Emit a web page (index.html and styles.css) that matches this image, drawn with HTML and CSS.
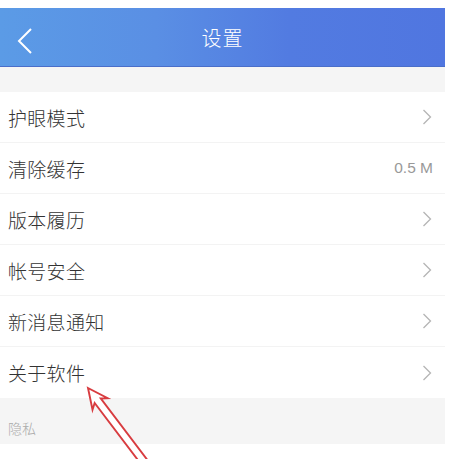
FILE: index.html
```html
<!DOCTYPE html>
<html lang="zh">
<head>
<meta charset="utf-8">
<link rel="stylesheet" href="styles.css">
</head>
<body>
<div class="screen">
  <header class="topbar">
    <svg class="back" width="18" height="28" viewBox="0 0 18 28"><path d="M15 2 L3 14 L15 26" fill="none" stroke="#fff" stroke-width="2"/></svg>
    <div class="title">设置</div>
  </header>
  <div class="gap"></div>
  <ul class="list">
    <li class="row"><span class="label">护眼模式</span><svg class="chev" width="10" height="16" viewBox="0 0 10 16"><path d="M1.5 1 L8.5 8 L1.5 15" fill="none" stroke="#b5b5b5" stroke-width="1.3"/></svg></li>
    <li class="row"><span class="label">清除缓存</span><span class="value">0.5 M</span></li>
    <li class="row"><span class="label">版本履历</span><svg class="chev" width="10" height="16" viewBox="0 0 10 16"><path d="M1.5 1 L8.5 8 L1.5 15" fill="none" stroke="#b5b5b5" stroke-width="1.3"/></svg></li>
    <li class="row"><span class="label">帐号安全</span><svg class="chev" width="10" height="16" viewBox="0 0 10 16"><path d="M1.5 1 L8.5 8 L1.5 15" fill="none" stroke="#b5b5b5" stroke-width="1.3"/></svg></li>
    <li class="row"><span class="label">新消息通知</span><svg class="chev" width="10" height="16" viewBox="0 0 10 16"><path d="M1.5 1 L8.5 8 L1.5 15" fill="none" stroke="#b5b5b5" stroke-width="1.3"/></svg></li>
    <li class="row"><span class="label">关于软件</span><svg class="chev" width="10" height="16" viewBox="0 0 10 16"><path d="M1.5 1 L8.5 8 L1.5 15" fill="none" stroke="#b5b5b5" stroke-width="1.3"/></svg></li>
  </ul>
  <div class="section">隐私</div>
  <svg class="arrow" width="140" height="110" viewBox="0 0 140 110">
    <g transform="translate(8 4) rotate(52.8)">
      <polygon points="0,0 20,-9.5 16,-3.8 120,-3.8 120,3.8 16,3.8 20,9.5" fill="#fff" stroke="#d83c40" stroke-width="1.9" stroke-linejoin="miter"/>
    </g>
  </svg>
</div>
</body>
</html>
```

FILE: styles.css
```css
* { box-sizing: border-box; }
html, body { margin: 0; padding: 0; background: #fff; }
body {
  font-family: "Noto Sans CJK SC", "Noto Sans", "Liberation Sans", sans-serif;
  overflow: hidden;
}
.screen {
  position: relative;
  width: 445px;
  margin-top: 8px;
  height: 451px;
  overflow: hidden;
}
.topbar {
  height: 59px;
  display: flex;
  align-items: center;
  justify-content: center;
  position: relative;
  background: linear-gradient(90deg, #5b9be6 0%, #5a8fe4 35%, #527be1 65%, #5076e0 100%);
  border-bottom: 1px solid #4a6ec9;
}
.back {
  position: absolute;
  left: 16px;
  top: 19px;
}
.title {
  color: #fff;
  font-size: 20px;
  font-weight: 300;
  letter-spacing: 1px;
}
.gap {
  height: 25px;
  background: #f5f5f5;
}
.list {
  list-style: none;
  margin: 0;
  padding: 0;
}
.row {
  height: 51px;
  display: flex;
  align-items: center;
  justify-content: space-between;
  padding: 0 12px 0 8px;
  border-bottom: 1px solid #f3f3f3;
}
.row:last-child { border-bottom: none; }
.label {
  font-size: 19px;
  font-weight: 300;
  color: #333;
  letter-spacing: 0.3px;
}
.value {
  font-family: "Liberation Sans", sans-serif;
  font-size: 15.5px;
  color: #999;
}
.chev { margin-right: 1px; }
.section {
  height: 46px;
  background: #f5f5f5;
  display: flex;
  align-items: center;
  padding: 13px 0 0 8px;
  font-size: 14px;
  font-weight: 300;
  color: #aaa;
}
.arrow {
  position: absolute;
  left: 80px;
  top: 376px;
}
```
